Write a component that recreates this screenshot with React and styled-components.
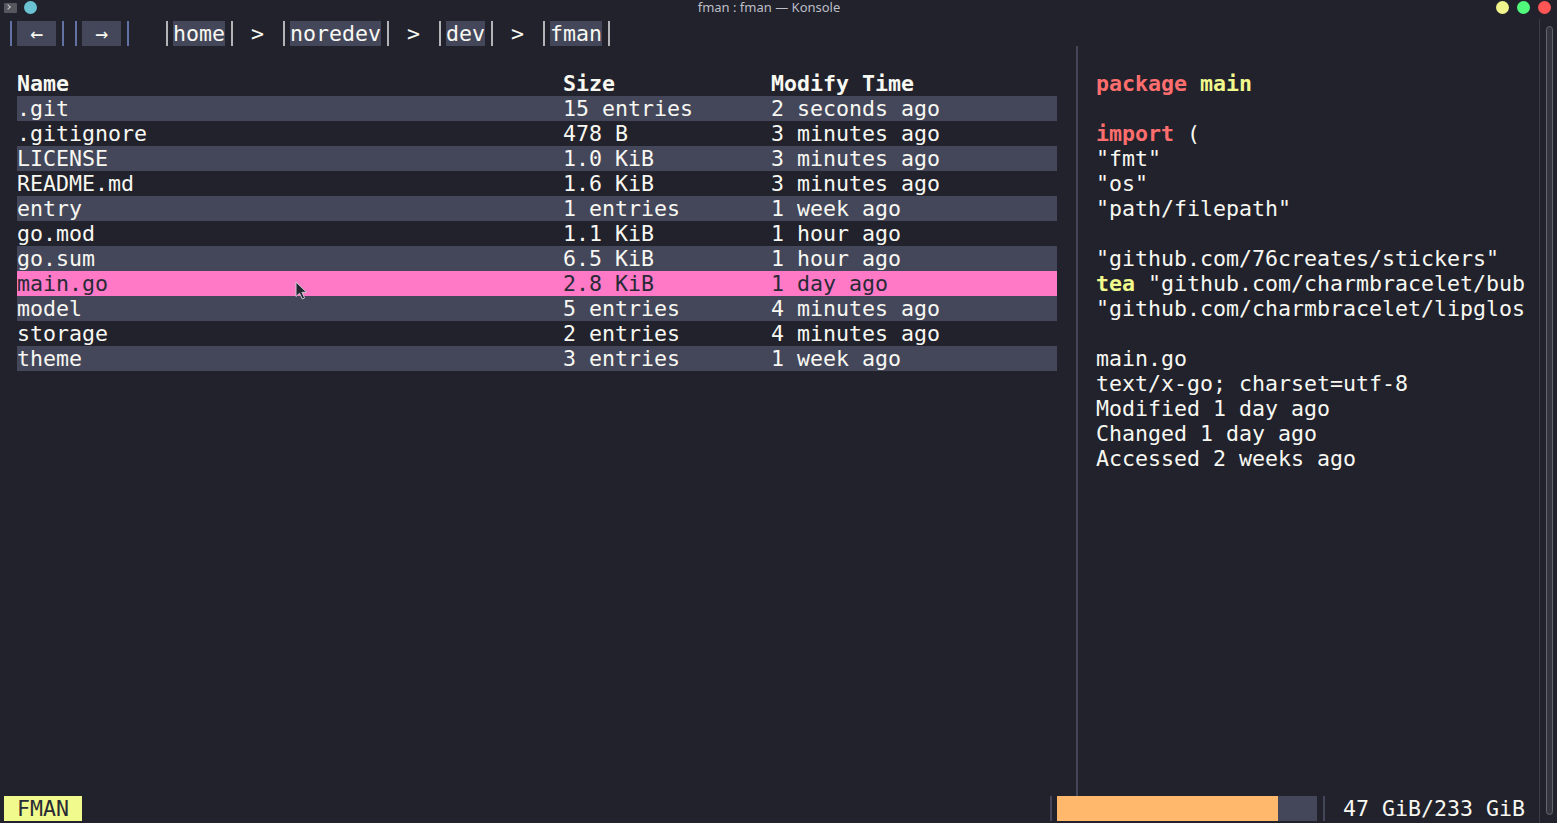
import React from 'react'
import styled, { createGlobalStyle } from 'styled-components'

const CELL = 13
const ROW = 25

const Global = createGlobalStyle`
  html, body {
    margin: 0;
    padding: 0;
    background: #21222c;
    overflow: hidden;
  }
`

const Window = styled.div`
  width: 1557px;
  height: 823px;
  display: flex;
  flex-direction: column;
  background: #21222c;
  color: #f8f8f2;
  position: relative;
  overflow: hidden;
`

const TitleBar = styled.div`
  height: 19px;
  display: flex;
  align-items: flex-start;
  padding: 0 4px;
  font-family: "Noto Sans", sans-serif;
  font-size: 13px;
  line-height: 15px;
  color: #bdbec6;
`

const TitleLeft = styled.div`
  display: flex;
  align-items: center;
  gap: 7px;
  height: 15px;
  width: 90px;
`

const AppIcon = styled.div`
  width: 13px;
  height: 10px;
  border-radius: 1px;
  background: #55575f;
  position: relative;
  &::after {
    content: '';
    position: absolute;
    left: 2px;
    top: 2px;
    width: 3px;
    height: 3px;
    border-right: 1px solid #c8c8c8;
    border-bottom: 1px solid #c8c8c8;
    transform: rotate(-45deg);
  }
`

const Dot = styled.div`
  width: 13px;
  height: 13px;
  border-radius: 50%;
  background: ${p => p.color};
`

const Title = styled.div`
  flex: 1;
  text-align: center;
  padding-right: 17px;
`

const TitleRight = styled.div`
  display: flex;
  align-items: center;
  gap: 8px;
  height: 15px;
  width: 90px;
  justify-content: flex-end;
  padding-right: 2px;
`

const Body = styled.div`
  flex: 1;
  display: flex;
  min-height: 0;
`

const Terminal = styled.div`
  flex: 1;
  padding: 2px 0 0 4px;
  display: flex;
  flex-direction: column;
  font-family: "DejaVu Sans Mono", "Liberation Mono", monospace;
  font-size: 21.6px;
  line-height: ${ROW}px;
  white-space: pre;
`

const Scrollbar = styled.div`
  width: 17px;
  border-left: 1px solid #3a3c47;
  display: flex;
  justify-content: center;
  padding: 7px 0 8px;
`

const Thumb = styled.div`
  width: 5px;
  border: 1px solid #64666f;
  border-radius: 4px;
  background: #33353f;
  margin-left: 2px;
`

const Crumbs = styled.div`
  height: ${ROW}px;
  display: flex;
`

const Sep = styled.span`
  width: ${CELL}px;
  height: ${ROW}px;
  display: inline-flex;
  justify-content: center;
  &::before {
    content: '';
    width: 2px;
    height: 100%;
    background: ${p => p.color};
  }
`

const Chip = styled.span`
  background: #44475a;
  color: #f8f8f2;
`

const Gap = styled.span`
  width: ${p => p.cols * CELL}px;
  display: inline-block;
  text-align: center;
`

const Main = styled.div`
  height: ${30 * ROW}px;
  display: flex;
`

const FilePane = styled.div`
  width: ${82 * CELL}px;
  padding: ${ROW}px 0 0 ${CELL}px;
  box-sizing: border-box;
  position: relative;
`

const FileRow = styled.div`
  width: ${80 * CELL}px;
  height: ${ROW}px;
  display: grid;
  grid-template-columns: ${42 * CELL}px ${16 * CELL}px 1fr;
  background: ${p => (p.selected ? '#ff79c6' : p.striped ? '#44475a' : 'transparent')};
  color: ${p => (p.selected ? '#282a36' : '#f8f8f2')};
  font-weight: ${p => (p.head ? 'bold' : 'normal')};
`

const Divider = styled.div`
  width: ${CELL}px;
  display: flex;
  justify-content: center;
  &::before {
    content: '';
    width: 2px;
    background: #44475a;
  }
`

const Preview = styled.div`
  width: ${34 * CELL}px;
  padding: ${ROW}px 0 0 ${CELL}px;
  overflow: hidden;
`

const Line = styled.div`
  height: ${ROW}px;
`

const Tok = styled.span`
  color: ${p => (p.c === 'red' ? '#ff6e6e' : p.c === 'yellow' ? '#f1fa8c' : '#f8f8f2')};
  font-weight: ${p => (p.b ? 'bold' : 'normal')};
`

const Status = styled.div`
  height: ${ROW}px;
  display: flex;
`

const Badge = styled.span`
  width: ${6 * CELL}px;
  background: #f1fa8c;
  color: #282a36;
`

const Usage = styled.span`
  display: inline-flex;
  width: ${20 * CELL}px;
  background: #44475a;
`

const UsageFill = styled.span`
  background: #ffb86c;
`

const Cursor = styled.svg`
  position: absolute;
  left: 291px;
  top: 235px;
  width: 13px;
  height: 19px;
`

const files = [
  ['.git', '15 entries', '2 seconds ago'],
  ['.gitignore', '478 B', '3 minutes ago'],
  ['LICENSE', '1.0 KiB', '3 minutes ago'],
  ['README.md', '1.6 KiB', '3 minutes ago'],
  ['entry', '1 entries', '1 week ago'],
  ['go.mod', '1.1 KiB', '1 hour ago'],
  ['go.sum', '6.5 KiB', '1 hour ago'],
  ['main.go', '2.8 KiB', '1 day ago'],
  ['model', '5 entries', '4 minutes ago'],
  ['storage', '2 entries', '4 minutes ago'],
  ['theme', '3 entries', '1 week ago'],
]

const preview = [
  [{ t: 'package', c: 'red', b: 1 }, { t: ' ' }, { t: 'main', c: 'yellow', b: 1 }],
  [],
  [{ t: 'import', c: 'red', b: 1 }, { t: ' (' }],
  [{ t: '"fmt"' }],
  [{ t: '"os"' }],
  [{ t: '"path/filepath"' }],
  [],
  [{ t: '"github.com/76creates/stickers"' }],
  [{ t: 'tea', c: 'yellow', b: 1 }, { t: ' "github.com/charmbracelet/bub' }],
  [{ t: '"github.com/charmbracelet/lipglos' }],
  [],
  [{ t: 'main.go' }],
  [{ t: 'text/x-go; charset=utf-8' }],
  [{ t: 'Modified 1 day ago' }],
  [{ t: 'Changed 1 day ago' }],
  [{ t: 'Accessed 2 weeks ago' }],
]

const path = ['home', 'noredev', 'dev', 'fman']
const used = 17

export default function App() {
  return (
    <Window>
      <Global />
      <TitleBar>
        <TitleLeft>
          <AppIcon />
          <Dot color="#6bc2d3" />
        </TitleLeft>
        <Title>fman : fman — Konsole</Title>
        <TitleRight>
          <Dot color="#f1f58b" />
          <Dot color="#50fa7b" />
          <Dot color="#ff5555" />
        </TitleRight>
      </TitleBar>
      <Body>
        <Terminal>
          <Crumbs>
            <Sep color="#6272a4" />
            <Chip> ← </Chip>
            <Sep color="#6272a4" />
            <Sep color="#6272a4" />
            <Chip> → </Chip>
            <Sep color="#6272a4" />
            <Gap cols={2} />
            {path.map((p, i) => (
              <React.Fragment key={p}>
                {i > 0 && <Gap cols={3}>&gt;</Gap>}
                <Sep color="#b4b4b8" />
                <Chip>{p}</Chip>
                <Sep color="#b4b4b8" />
              </React.Fragment>
            ))}
          </Crumbs>
          <Main>
            <FilePane>
              <FileRow head>
                <span>Name</span>
                <span>Size</span>
                <span>Modify Time</span>
              </FileRow>
              {files.map(([name, size, time], i) => (
                <FileRow key={name} striped={i % 2 === 0} selected={name === 'main.go'}>
                  <span>{name}</span>
                  <span>{size}</span>
                  <span>{time}</span>
                </FileRow>
              ))}
              <Cursor viewBox="0 0 13 19">
                <path
                  d="M1 1 L1 15.5 L4.5 12.2 L7.3 18 L9.6 16.9 L6.9 11.3 L11.6 11.3 Z"
                  fill="#23252f"
                  stroke="#c9cad2"
                  strokeWidth="1"
                  strokeLinejoin="round"
                />
              </Cursor>
            </FilePane>
            <Divider />
            <Preview>
              {preview.map((line, i) => (
                <Line key={i}>
                  {line.map((tok, j) => (
                    <Tok key={j} c={tok.c} b={tok.b}>{tok.t}</Tok>
                  ))}
                </Line>
              ))}
            </Preview>
          </Main>
          <Status>
            <Badge> FMAN </Badge>
            <Gap cols={74} />
            <Sep color="#44475a" />
            <Usage>
              <UsageFill style={{ width: used * CELL }} />
            </Usage>
            <Sep color="#44475a" />
            <span> 47 GiB/233 GiB</span>
          </Status>
        </Terminal>
        <Scrollbar>
          <Thumb />
        </Scrollbar>
      </Body>
    </Window>
  )
}
